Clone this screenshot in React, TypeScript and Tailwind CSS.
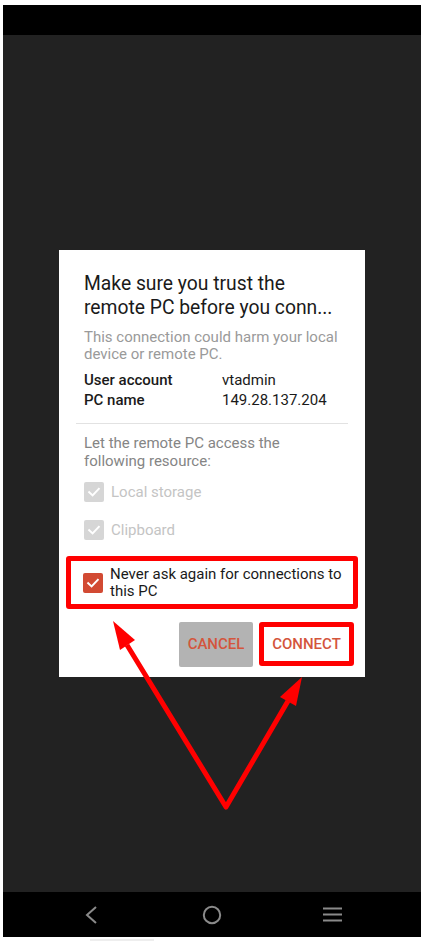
import React from 'react';

function CheckBox({ color }: { color: string }) {
	return (
		<div className={`flex h-[20px] w-[20px] shrink-0 items-center justify-center rounded-[2px] ${color}`}>
			<svg width="14" height="14" viewBox="0 0 14 14" fill="none">
				<path d="M2.2 7.2 L5.6 10.4 L11.8 3.8" stroke="#ffffff" strokeWidth="2" strokeLinecap="square" />
			</svg>
		</div>
	);
}

function Dialog() {
	return (
		<div className="flex w-[306px] flex-col bg-white pl-[25px] pr-[11px] pt-[22px] pb-[10px]">
			<h1 className="text-[19.3px] leading-[24px] text-[#1a1a1a]">
				Make sure you trust the
				<br />
				remote PC before you conn...
			</h1>
			<p className="mt-[9px] text-[15px] leading-[17px] text-[#9a9a9a]">
				This connection could harm your local
				<br />
				device or remote PC.
			</p>
			<div className="mt-[7px] flex flex-col text-[15px] leading-[20px] text-[#1a1a1a]">
				<div className="flex">
					<span className="w-[138px] font-medium">User account</span>
					<span>vtadmin</span>
				</div>
				<div className="flex">
					<span className="w-[138px] font-medium">PC name</span>
					<span>149.28.137.204</span>
				</div>
			</div>
			<div className="mt-[13px] mr-[6px] -ml-[8px] h-px bg-[#e2e2e2]" />
			<p className="mt-[10px] text-[15px] leading-[18px] text-[#858585]">
				Let the remote PC access the
				<br />
				following resource:
			</p>
			<div className="mt-[3px] flex flex-col">
				<div className="flex h-[38px] items-center gap-[7px]">
					<CheckBox color="bg-[#d6d6d6]" />
					<span className="text-[15px] text-[#c4c4c4]">Local storage</span>
				</div>
				<div className="flex h-[38px] items-center gap-[7px]">
					<CheckBox color="bg-[#d6d6d6]" />
					<span className="text-[15px] text-[#c4c4c4]">Clipboard</span>
				</div>
			</div>
			<div className="mt-[7px] -ml-[18px] mr-[-4px] flex h-[53px] items-center gap-[7px] rounded-[3px] border-[5px] border-[#ff0000] pl-[12px]">
				<CheckBox color="bg-[#d24a33]" />
				<span className="text-[15px] leading-[17px] text-[#1a1a1a]">
					Never ask again for connections to
					<br />
					this PC
				</span>
			</div>
			<div className="mt-[13px] flex justify-end gap-[6px]">
				<button className="flex h-[45px] w-[74px] items-center justify-center rounded-[2px] bg-[#b3b3b3] text-[15px] font-medium text-[#d4553c]">
					CANCEL
				</button>
				<button className="flex h-[44px] w-[95px] items-center justify-center rounded-[3px] border-[5px] border-[#ff0000] text-[15px] font-medium text-[#d4553c]">
					CONNECT
				</button>
			</div>
		</div>
	);
}

export default function App() {
	return (
		<div className="relative flex h-[941px] w-[426px] flex-col bg-white pt-[5px] pl-[3px] pr-[5px] pb-[4px] font-['Roboto',sans-serif]">
			<div className="h-[30px] bg-black" />
			<div className="flex flex-1 items-center justify-center bg-[#222222]">
				<Dialog />
			</div>
			<div className="flex h-[45px] items-center bg-black pl-[81px]">
				<svg width="14" height="18" viewBox="0 0 14 18" fill="none">
					<path d="M12 1 L3 9 L12 17" stroke="#8a8a8a" strokeWidth="2" />
				</svg>
				<svg className="ml-[104px]" width="20" height="20" viewBox="0 0 20 20" fill="none">
					<circle cx="10" cy="10" r="8.2" stroke="#8a8a8a" strokeWidth="2" />
				</svg>
				<svg className="ml-[101px]" width="19" height="15" viewBox="0 0 19 15" fill="none">
					<rect x="0" y="0.5" width="19" height="2" fill="#8a8a8a" />
					<rect x="0" y="6.5" width="19" height="2" fill="#8a8a8a" />
					<rect x="0" y="12.5" width="19" height="2" fill="#8a8a8a" />
				</svg>
			</div>
			<div className="absolute bottom-0 left-[90px] h-[2px] w-[64px] bg-[#eeeeee]" />
			<svg className="pointer-events-none absolute inset-0" width="426" height="941" viewBox="0 0 426 941">
				<polyline points="127,645 226,807 288,701" fill="none" stroke="#ff0000" strokeWidth="5" strokeLinejoin="round" />
				<polygon points="113,621 135,640 120,650" fill="#ff0000" />
				<polygon points="302,677 296,706 280,697" fill="#ff0000" />
			</svg>
		</div>
	);
}
